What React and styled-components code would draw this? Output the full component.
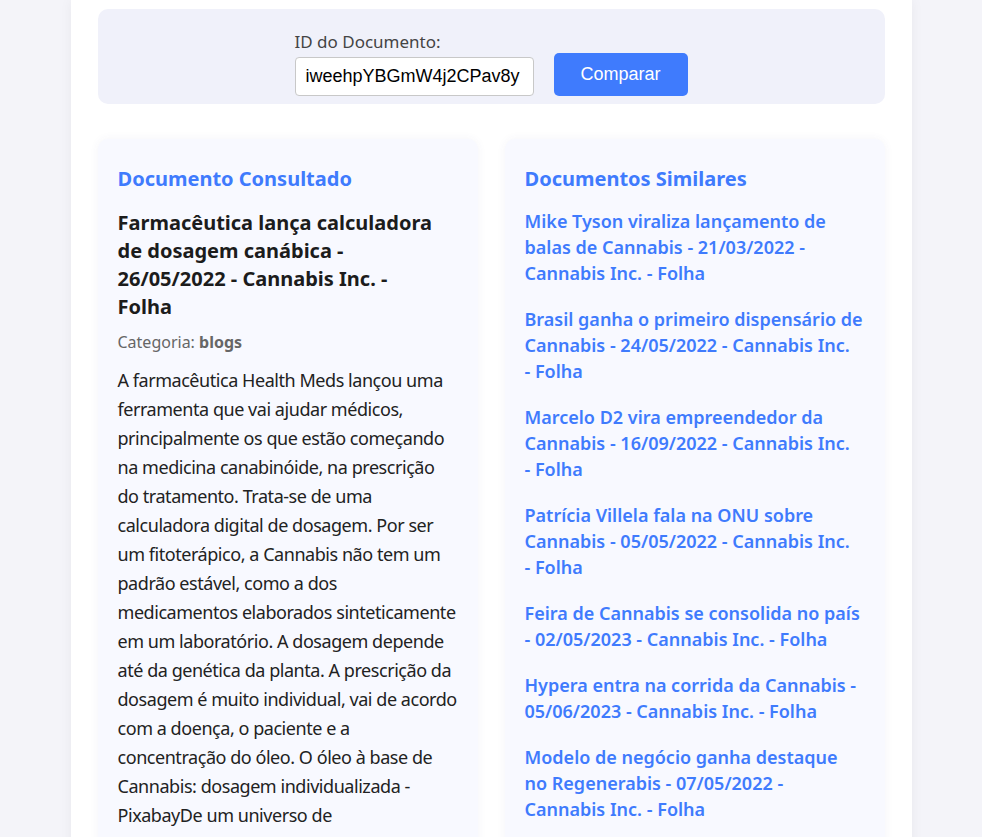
import React from 'react';
import styled, { createGlobalStyle } from 'styled-components';

const GlobalStyle = createGlobalStyle`
    html, body {
        margin: 0;
        padding: 0;
        background: #fff;
        font-family: "Noto Sans", "Open Sans", sans-serif;
    }
`;

const Page = styled.div`
    height: 837px;
    overflow: hidden;
    margin-right: 19px;
    background: #f4f4f9;
`;

const Container = styled.div`
    width: 787px;
    margin: 0 auto;
    padding: 9px 27px 40px 27px;
    background: #fff;
    min-height: 828px;
    box-shadow: 0 0 12px rgba(0, 0, 0, 0.05);
`;

const SearchForm = styled.form`
    display: flex;
    justify-content: center;
    align-items: flex-end;
    gap: 20px;
    background: #f0f1fa;
    border-radius: 10px;
    padding: 21px 0 8px 0;
`;

const Field = styled.div`
    display: flex;
    flex-direction: column;
`;

const Label = styled.label`
    font-size: 17px;
    line-height: 23px;
    color: #444;
    margin-bottom: 4px;
`;

const Input = styled.input`
    width: 217px;
    height: 37px;
    padding: 0 10px;
    border: 1px solid #c8c8c8;
    border-radius: 4px;
    font-family: "Liberation Sans", Arial, sans-serif;
    font-size: 18px;
    color: #000;
    box-sizing: content-box;
`;

const Button = styled.button`
    width: 134px;
    height: 43px;
    border: none;
    border-radius: 5px;
    background: #3f7bfd;
    color: #fff;
    font-family: "Liberation Sans", Arial, sans-serif;
    font-size: 18px;
    cursor: pointer;
`;

const Columns = styled.div`
    display: grid;
    grid-template-columns: 1fr 1fr;
    gap: 27px;
    margin-top: 35px;
`;

const Card = styled.section`
    background: #f8f9ff;
    border-radius: 10px;
    box-shadow: 0 0 10px rgba(60, 70, 140, 0.06);
    padding: 22px 20px 20px 20px;
`;

const CardTitle = styled.h2`
    margin: 4px 0 ${(p) => (p.$tight ? 16 : 17)}px 0;
    font-size: 20px;
    font-weight: 700;
    color: #3f7bfd;
`;

const DocTitle = styled.h3`
    margin: 0 0 10px 0;
    max-width: 322px;
    font-size: 20px;
    line-height: 28px;
    font-weight: 700;
    color: #1c1c1c;
`;

const Category = styled.p`
    margin: 0 0 13px 0;
    font-size: 16px;
    color: #666;
    b {
        color: #666;
    }
`;

const Body = styled.p`
    margin: 0;
    font-size: 18px;
    line-height: 29px;
    letter-spacing: -0.45px;
    color: #222;
`;

const SimilarList = styled.ul`
    list-style: none;
    margin: 0;
    padding: 0;
`;

const SimilarItem = styled.li`
    margin-bottom: 20px;
`;

const SimilarLink = styled.a`
    font-size: 18px;
    line-height: 26px;
    font-weight: 600;
    color: #3f7bfd;
    text-decoration: none;
`;

const Source = styled.span`
    white-space: nowrap;
`;

const similares = [
    'Mike Tyson viraliza lançamento de balas de Cannabis - 21/03/2022 - Cannabis Inc.',
    'Brasil ganha o primeiro dispensário de Cannabis - 24/05/2022 - Cannabis Inc.',
    'Marcelo D2 vira empreendedor da Cannabis - 16/09/2022 - Cannabis Inc.',
    'Patrícia Villela fala na ONU sobre Cannabis - 05/05/2022 - Cannabis Inc.',
    'Feira de Cannabis se consolida no país - 02/05/2023 - Cannabis Inc.',
    'Hypera entra na corrida da Cannabis - 05/06/2023 - Cannabis Inc.',
    'Modelo de negócio ganha destaque no Regenerabis - 07/05/2022 - Cannabis Inc.',
    'Cannabis medicinal cresce no país - 10/05/2022 - Cannabis Inc.',
];

const texto = 'A farmacêutica Health Meds lançou uma ferramenta que vai ajudar médicos, principalmente os que estão começando na medicina canabinóide, na prescrição do tratamento. Trata-se de uma calculadora digital de dosagem. Por ser um fitoterápico, a Cannabis não tem um padrão estável, como a dos medicamentos elaborados sinteticamente em um laboratório. A dosagem depende até da genética da planta. A prescrição da dosagem é muito individual, vai de acordo com a doença, o paciente e a concentração do óleo. O óleo à base de Cannabis: dosagem individualizada - PixabayDe um universo de aproximadamente 500 mil médicos no Brasil, poucos prescrevem Cannabis.';

const App = () => {
    return (
        <Page>
            <GlobalStyle />
            <Container>
                <SearchForm onSubmit={(e) => e.preventDefault()}>
                    <Field>
                        <Label htmlFor="docId">ID do Documento:</Label>
                        <Input id="docId" defaultValue="iweehpYBGmW4j2CPav8y" />
                    </Field>
                    <Button type="submit">Comparar</Button>
                </SearchForm>
                <Columns>
                    <Card>
                        <CardTitle>Documento Consultado</CardTitle>
                        <DocTitle>Farmacêutica lança calculadora de dosagem canábica - 26/05/2022 - Cannabis Inc. - Folha</DocTitle>
                        <Category>Categoria: <b>blogs</b></Category>
                        <Body>{texto}</Body>
                    </Card>
                    <Card>
                        <CardTitle $tight>Documentos Similares</CardTitle>
                        <SimilarList>
                            {similares.map((s) => (
                                <SimilarItem key={s}>
                                    <SimilarLink href="#">
                                        {s} <Source>- Folha</Source>
                                    </SimilarLink>
                                </SimilarItem>
                            ))}
                        </SimilarList>
                    </Card>
                </Columns>
            </Container>
        </Page>
    );
};

export default App;
